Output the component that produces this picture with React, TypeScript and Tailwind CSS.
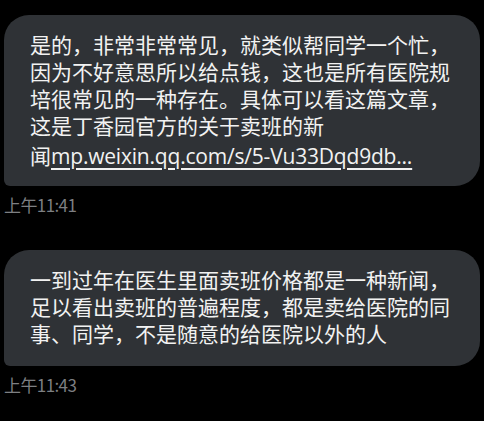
const CJK = "font-['Noto_Sans_CJK_SC','Noto_Sans',sans-serif]";

interface MessageProps {
    children: React.ReactNode;
    time: string;
}

function Message({ children, time }: MessageProps) {
    return (
        <div className="flex flex-col">
            <div className="mx-1 rounded-[25px] rounded-bl-[6px] bg-[#2f3236] pl-[26px] pr-4 pt-[16px] pb-[19px] text-[21px] leading-[27px] text-[#f2f2f2]">
                {children}
            </div>
            <div className="ml-1 mt-[8px] text-[17px] leading-[22px] tracking-[-0.6px] text-[#7d7f82]">
                {time}
            </div>
        </div>
    );
}

export default function App() {
    return (
        <div className={`flex h-[421px] w-[484px] flex-col gap-[34px] bg-black pt-[15px] ${CJK}`}>
            <Message time="上午11:41">
                <p>
                    是的，非常非常常见，就类似帮同学一个忙，因为不好意思所以给点钱，这也是所有医院规培很常见的一种存在。具体可以看这篇文章，这是丁香园官方的关于卖班的新
                </p>
                <p className="-mb-[3px] mt-[3px]">
                    闻
                    <span className="font-['Open_Sans',sans-serif] text-[21px] font-medium tracking-[-0.2px] underline underline-offset-[4px]">
                        mp.weixin.qq.com/s/5-Vu33Dqd9db...
                    </span>
                </p>
            </Message>
            <Message time="上午11:43">
                一到过年在医生里面卖班价格都是一种新闻，足以看出卖班的普遍程度，都是卖给医院的同事、同学，不是随意的给医院以外的人
            </Message>
        </div>
    );
}
